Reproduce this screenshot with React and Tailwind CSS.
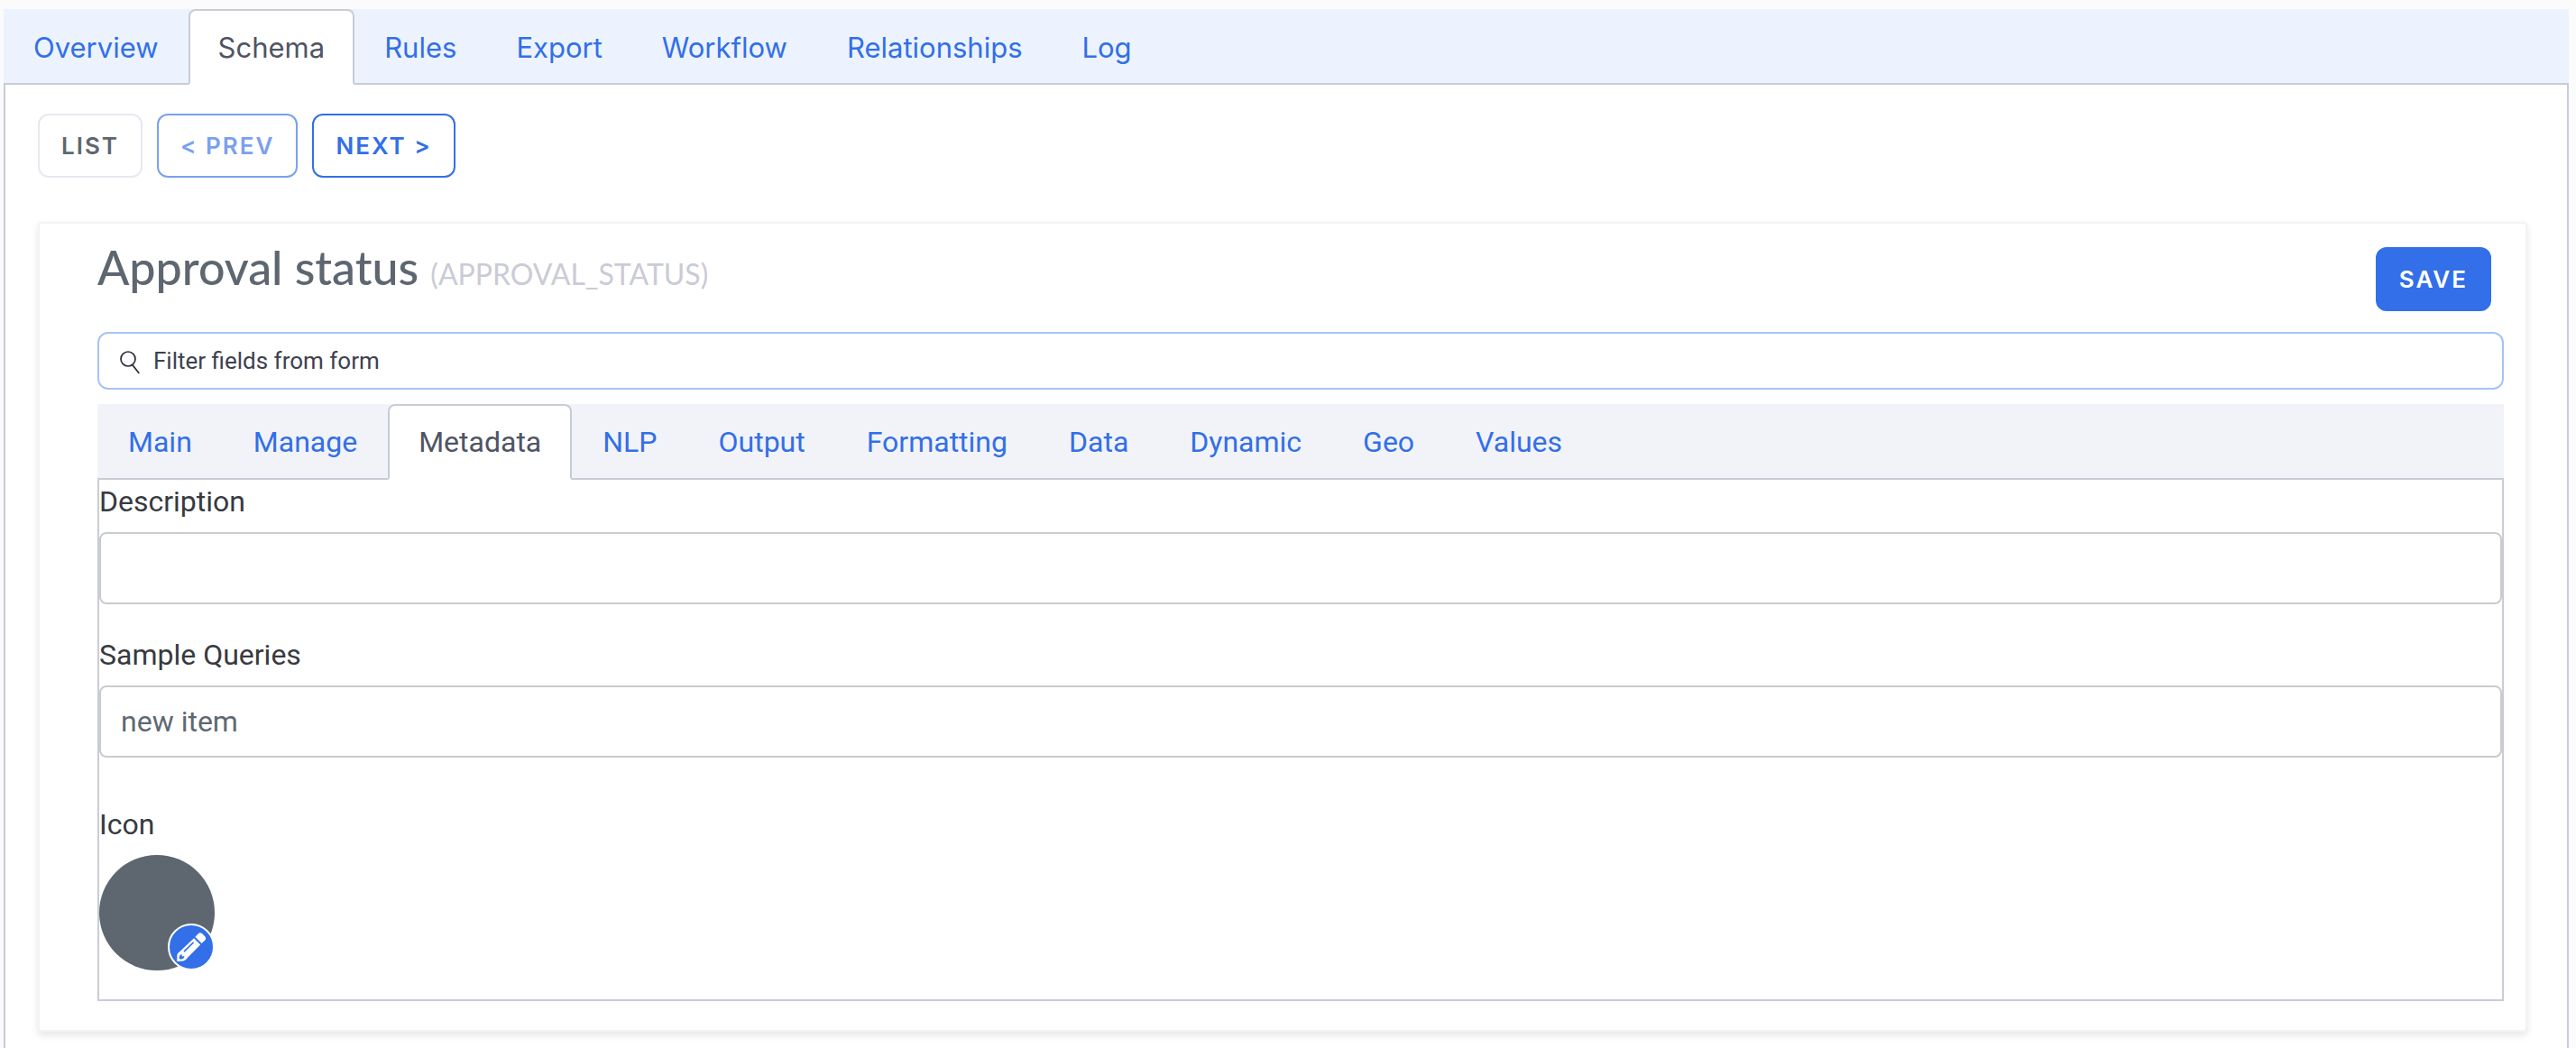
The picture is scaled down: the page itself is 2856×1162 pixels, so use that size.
import React from "react";

const TOP_TABS = ["Overview", "Schema", "Rules", "Export", "Workflow", "Relationships", "Log"];
const FORM_TABS = ["Main", "Manage", "Metadata", "NLP", "Output", "Formatting", "Data", "Dynamic", "Geo", "Values"];

function Tabs({ items, active, className, tabClassName, label }) {
  return (
    <nav aria-label={label} className={`flex border-b-2 border-[#c9ccd6] ${className}`}>
      {items.map((item) => (
        <a
          key={item}
          href={`#${item.toLowerCase()}`}
          aria-current={item === active ? "page" : undefined}
          className={`-mb-0.5 border-2 leading-12 ${tabClassName} ${
            item === active
              ? "rounded-t-lg border-[#c9ccd6] border-b-white bg-white text-[#4f5464]"
              : "border-transparent text-[#326fe8]"
          }`}
        >
          {item}
        </a>
      ))}
    </nav>
  );
}

function Button({ children, className, ...rest }) {
  return (
    <button
      type="button"
      className={`flex h-[71px] items-center rounded-xl border-2 px-6 font-[Inter] text-[26px] font-semibold tracking-[2px] ${className}`}
      {...rest}
    >
      {children}
    </button>
  );
}

function SearchIcon() {
  return (
    <svg viewBox="0 0 24 30" className="h-[30px] w-6 shrink-0" fill="none" stroke="#2b2e38" strokeWidth="1.7" aria-hidden="true">
      <circle cx="10" cy="13" r="8" />
      <path d="M14.8 19.6 22.3 29" />
    </svg>
  );
}

function PencilIcon() {
  return (
    <svg viewBox="0 0 32 32" className="h-8 w-8" aria-hidden="true">
      <path
        fill="#fff"
        fillRule="evenodd"
        d="M19 6.2 26.2 13.4 11.8 28 Q10.5 30 7.5 31.6 L0.2 32 0.4 24.2 Q2 22 4 20.6Z M3.4 25.2 L2.4 28.6 4.6 29.8 7.6 28.4 8.6 26 5.8 26.4 5.4 23.8Z M18 10.2 L7.4 20.6 8.6 21.8 19.2 11.2Z"
      />
      <path fill="#fff" d="M20.4 4.8 23.6 1.4Q25.6-.8 28 1L31.2 4.2Q33 6.4 31.2 8.6L27.6 12Z" />
    </svg>
  );
}

function Field({ id, label, value }) {
  return (
    <div className="flex flex-col gap-2.5">
      <label htmlFor={id} className="text-[32px] leading-12 text-[#373a3f]">
        {label}
      </label>
      <input
        id={id}
        type="text"
        defaultValue={value}
        className="h-20 w-full rounded-lg border-2 border-[#cacbcd] bg-white px-[22px] text-[32px] text-[#5e6872]"
      />
    </div>
  );
}

export default function App() {
  return (
    <div className="flex min-h-screen flex-col bg-[#fbfbfb] pt-2.5 pr-2 pl-1 font-[Roboto,sans-serif]">
      <Tabs
        label="Sections"
        items={TOP_TABS}
        active="Schema"
        className="bg-[#ecf3fe] font-[Inter]"
        tabClassName="px-[31px] pt-[17px] pb-[15px] text-[31px]"
      />
      <main className="flex-1 border-x-2 border-[#c9ccd6] bg-white pt-8 pr-11 pb-[18px] pl-9">
        <div className="flex gap-4">
          <Button className="border-[#e8e9ef] text-[#5e6670]">LIST</Button>
          <Button className="border-[#326fe8] text-[#326fe8] opacity-65" disabled>
            &lt; PREV
          </Button>
          <Button className="border-[#326fe8] text-[#326fe8]">NEXT &gt;</Button>
        </div>

        <section className="mt-[49px] rounded border-2 border-[#f3f3f4] bg-white pr-6 pb-8 pl-16 shadow-[0_4px_8px_rgba(0,0,0,0.1)]">
          <header className="flex items-start justify-between pt-4 pr-3.5">
            <h1 className="font-['Lato_Medium',Lato] text-[52px] leading-16 font-medium text-[#5e6670]">
              Approval status <small className="font-[Lato] text-[32px] font-normal text-[#cacbd6]">(APPROVAL_STATUS)</small>
            </h1>
            <Button className="mt-2.5 border-[#326fe8] bg-[#326fe8] text-white">SAVE</Button>
          </header>

          <label className="mt-[23px] flex h-16 items-center gap-3.5 rounded-xl border-2 border-[#a6c3f7] px-[22px]">
            <SearchIcon />
            <input
              type="search"
              aria-label="Filter fields from form"
              placeholder="Filter fields from form"
              className="flex-1 text-[26px] text-[#3d4150] outline-none placeholder:text-[#3d4150]"
            />
          </label>

          <Tabs
            label="Field settings"
            items={FORM_TABS}
            active="Metadata"
            className="mt-4 bg-[#f2f3f8]"
            tabClassName="px-8 py-4 text-[32px]"
          />
          <form className="flex flex-col border-2 border-t-0 border-[#c9ccd6] pb-8">
            <div className="flex flex-col gap-8">
              <Field id="description" label="Description" value="" />
              <Field id="samples" label="Sample Queries" value="new item" />
            </div>
            <span className="mt-[50px] text-[32px] leading-12 text-[#373a3f]">Icon</span>
            <div className="relative mt-2.5 size-32 rounded-full bg-[#5e6670]">
              <button
                type="button"
                aria-label="Edit icon"
                className="absolute right-0 bottom-0 flex size-[52px] items-center justify-center rounded-full border-2 border-white bg-[#326fe8]"
              >
                <PencilIcon />
              </button>
            </div>
          </form>
        </section>
      </main>
    </div>
  );
}
